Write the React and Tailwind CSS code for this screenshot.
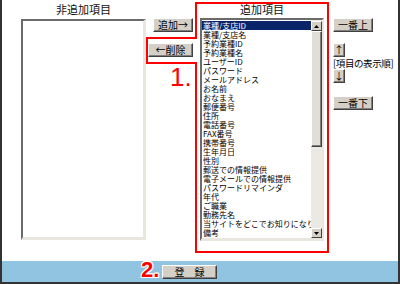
import React from 'react';

const selected = [
  '業種/支店ID', '業種/支店名', '予約業種ID', '予約業種名', 'ユーザーID', 'パスワード',
  'メールアドレス', 'お名前', 'おなまえ', '郵便番号', '住所', '電話番号', 'FAX番号',
  '携帯番号', '生年月日', '性別', '郵送での情報提供', '電子メールでの情報提供',
  'パスワードリマインダ', '年代', 'ご職業', '勤務先名', '当サイトをどこでお知りになりましたか', '備考',
];

const font = { fontFamily: '"Noto Sans CJK JP", "Noto Sans", sans-serif' };

const Btn = ({ children, className = '' }) => (
  <button
    type="button"
    className={`h-[14px] flex items-center justify-center bg-[#d4d0c8] border border-t-white border-l-white border-r-[#404040] border-b-[#404040] shadow-[inset_-1px_-1px_0_#808080] text-[10px] leading-none text-black ${className}`}
  >
    {children}
  </button>
);

const Arrow = ({ up }) => (
  <div className="w-[11px] h-[10px] bg-[#d4d0c8] border border-t-white border-l-white border-r-[#404040] border-b-[#404040] flex items-center justify-center">
    <svg width="5" height="3" viewBox="0 0 5 3">
      {up ? <path d="M2.5 0 L5 3 L0 3 Z" fill="#000" /> : <path d="M0 0 L5 0 L2.5 3 Z" fill="#000" />}
    </svg>
  </div>
);

export default function App() {
  return (
    <div className="relative w-[400px] h-[284px] bg-white border-l-2 border-r-2 border-b-2 border-[#333] flex flex-col" style={font}>
      <div className="flex h-[261px] pl-[19px]">
        {/* 非追加項目 */}
        <div className="w-[125px] flex flex-col">
          <div className="h-[19px] leading-[19px] text-center text-[11px] text-[#111]">非追加項目</div>
          <div className="h-[221px] bg-white border-l-2 border-t-2 border-l-[#6b6b6b] border-t-[#6b6b6b] border-r-[3px] border-b-[3px] border-r-[#e8e6df] border-b-[#e8e6df]" />
        </div>

        {/* 追加 / 削除 */}
        <div className="ml-[2px] w-[45px] flex flex-col items-end pt-[18px]">
          <Btn className="w-[40px]">追加→</Btn>
          <Btn className="w-[45px] mt-[11px]">←削除</Btn>
        </div>

        {/* 追加項目 */}
        <div className="ml-[7px] w-[124px] flex flex-col">
          <div className="h-[18px] leading-[19px] text-center text-[11px] text-[#111]">追加項目</div>
          <div className="h-[223px] flex border-l-2 border-t-2 border-l-[#6b6b6b] border-t-[#6b6b6b] border-r-[2px] border-b-[3px] border-r-[#e8e6df] border-b-[#e8e6df]">
            <div className="flex-1 min-w-0 overflow-hidden pt-[1px]">
              {selected.map((s, i) => (
                <div
                  key={s}
                  className={`h-[9px] flex items-center text-[8px] leading-[9px] whitespace-nowrap pl-[1px] ${i === 0 ? 'bg-[#0a246a] text-white' : 'text-black'}`}
                >
                  {s}
                </div>
              ))}
            </div>
            <div className="w-[11px] flex flex-col bg-[#ebe9e3] pt-[1px]">
              <Arrow up />
              <div className="h-[116px] bg-[#e0ded6] border border-t-white border-l-white border-r-[#404040] border-b-[#404040] shadow-[inset_-1px_-1px_0_#808080]" />
              <div className="flex-1" />
              <Arrow />
            </div>
          </div>
        </div>

        {/* 並び順 */}
        <div className="ml-[9px] flex flex-col items-start pt-[18px]">
          <Btn className="w-[40px]">一番上</Btn>
          <Btn className="w-[12px] mt-[11px]">↑</Btn>
          <div className="h-[12px] leading-[12px] text-[9.5px] tracking-[-0.4px] whitespace-nowrap text-black">[項目の表示順]</div>
          <Btn className="w-[12px]">↓</Btn>
          <Btn className="w-[40px] mt-[13px]">一番下</Btn>
        </div>
      </div>

      {/* bottom bar */}
      <div className="h-[21px] mt-[1px] bg-[#90c4e0] flex items-center pl-[160px]">
        <Btn className="w-[55px] h-[14px] gap-[10px]">
          <span>登</span>
          <span>録</span>
        </Btn>
      </div>

      {/* annotations */}
      <svg className="absolute left-[-2px] top-0 pointer-events-none" width="400" height="284">
        <polygon points="196,3 328,3 328,252 196,252 196,63 147,63 147,38 196,38" fill="none" stroke="#ff0000" strokeWidth="2" />
      </svg>
      <div
        className="absolute left-[168px] top-[62px] text-[26px] leading-[30px] text-[#ff0000]"
        style={{ fontFamily: '"Liberation Sans", Arial, sans-serif' }}
      >
        1.
      </div>
      <div
        className="absolute left-[139px] top-[258px] text-[22px] leading-[24px] font-bold text-[#ff0000] [text-shadow:1px_0_#fff,-1px_0_#fff,0_1px_#fff,0_-1px_#fff,1px_1px_#fff,-1px_-1px_#fff,1px_-1px_#fff,-1px_1px_#fff]"
        style={{ fontFamily: '"Liberation Sans", Arial, sans-serif' }}
      >
        2.
      </div>
    </div>
  );
}
